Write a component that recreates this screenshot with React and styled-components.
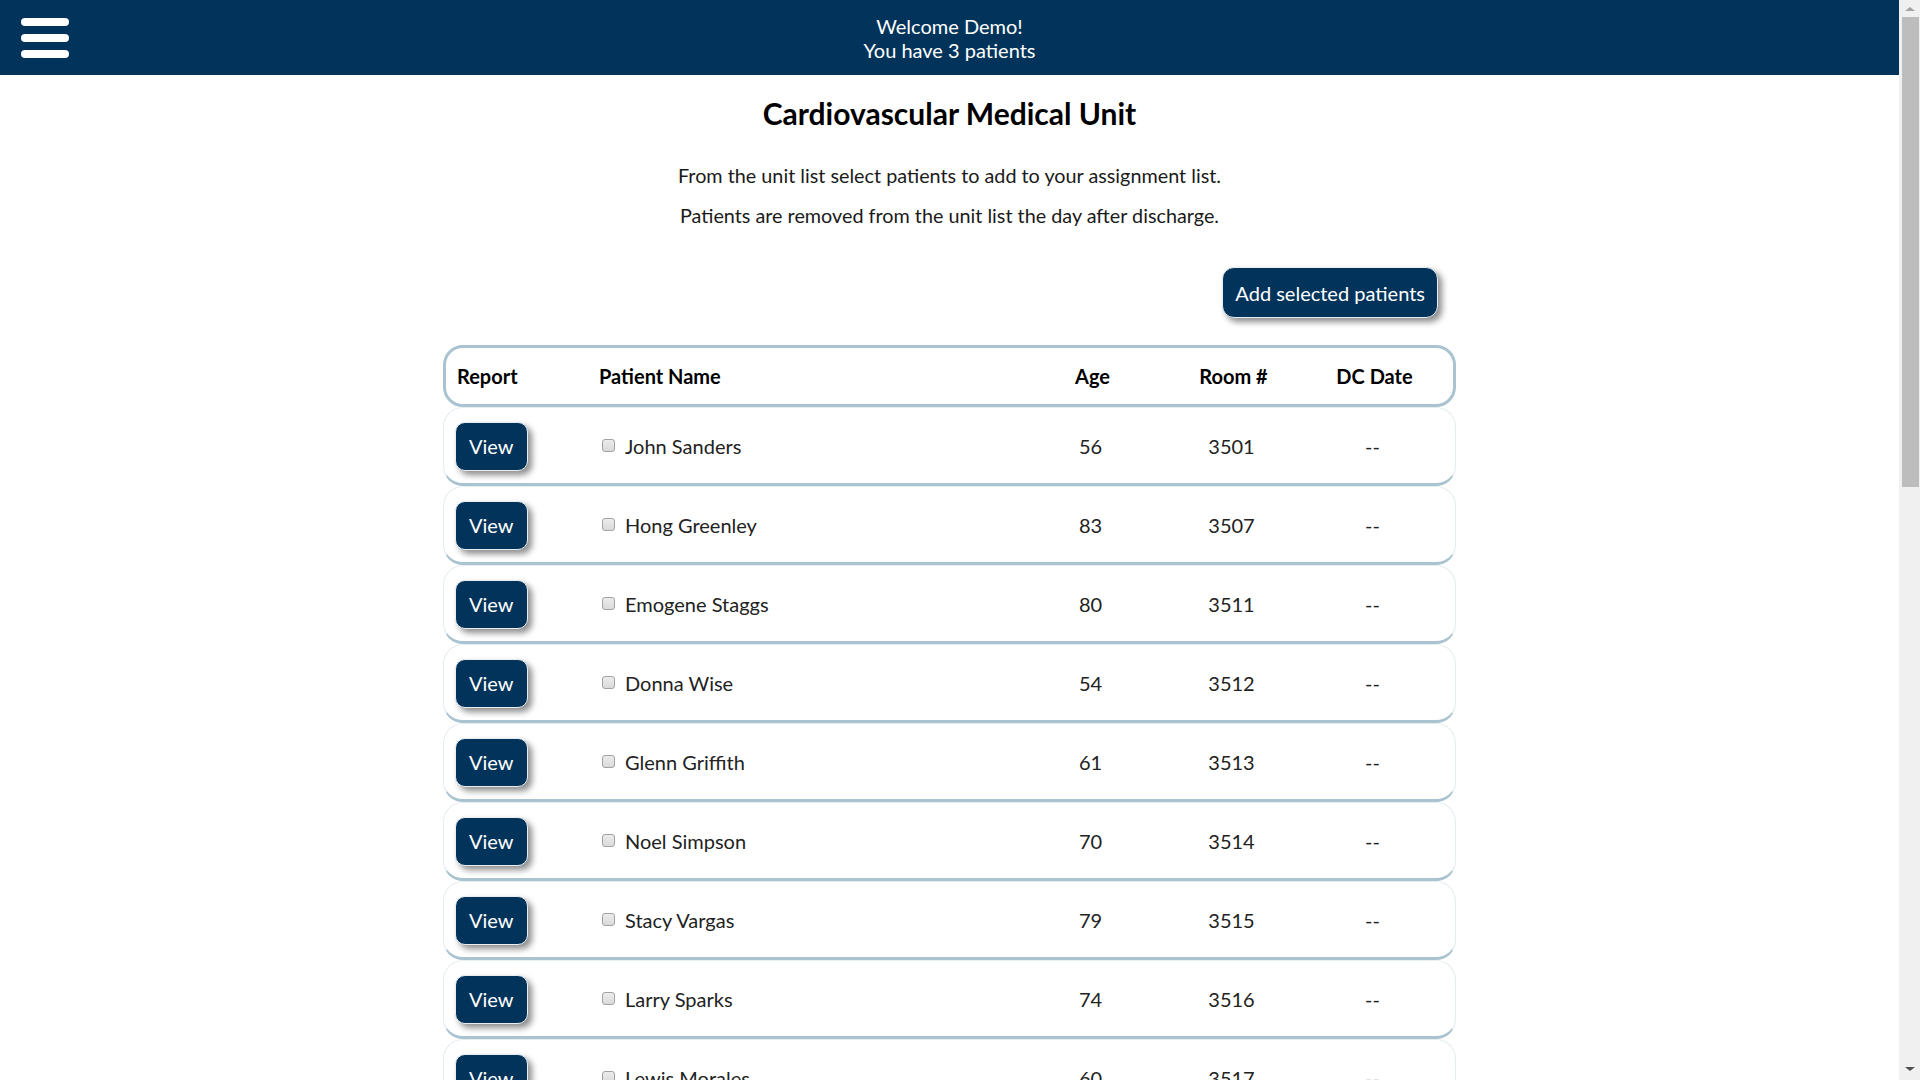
import React from "react";
import styled, { createGlobalStyle } from "styled-components";

const GlobalStyle = createGlobalStyle`
  body {
    margin: 0;
    font-family: Lato, "Open Sans", sans-serif;
    color: #111;
    background: #fff;
  }
`;

const NAVY = "#02335a";
const LINE = "#a9c3d0";

const Page = styled.div`
  padding-right: 21px;
`;

// stand-in for the browser scrollbar seen on the right of the screenshot
const ScrollTrack = styled.aside`
  position: fixed;
  top: 0;
  right: 0;
  bottom: 0;
  width: 21px;
  background: #f0f0f0;
  display: flex;
  flex-direction: column;
  align-items: center;
  padding: 3px 0;
  box-sizing: border-box;
`;

const Arrow = styled.span`
  width: 0;
  height: 0;
  border-left: 5px solid transparent;
  border-right: 5px solid transparent;
  ${(p) =>
    p.$down
      ? "border-top: 4px solid #505050; margin-top: auto; margin-bottom: 6px;"
      : "border-bottom: 4px solid #a3a3a3; margin-top: 4px;"}
`;

const Thumb = styled.span`
  width: 17px;
  height: 470px;
  margin-top: 6px;
  margin-left: 2px;
  background: #bdbdbd;
`;

const TopBar = styled.header`
  height: 75px;
  background: ${NAVY};
  display: grid;
  grid-template-columns: 1fr auto 1fr;
  align-items: center;
  color: #fff;
`;

const Burger = styled.button`
  justify-self: start;
  margin-left: 21px;
  width: 48px;
  height: 40px;
  padding: 0;
  border: none;
  background: transparent;
  display: flex;
  flex-direction: column;
  justify-content: space-between;
  cursor: pointer;

  span {
    display: block;
    height: 8px;
    border-radius: 4px;
    background: #fff;
  }
`;

const Welcome = styled.div`
  text-align: center;
  font-size: 20px;
  line-height: 24px;
`;

const Main = styled.main`
  width: 1013px;
  margin: 0 auto 8px;
`;

const Title = styled.h1`
  margin: 20px 0 0;
  text-align: center;
  font-size: 30px;
  line-height: 36px;
  font-weight: 700;
  color: #000;
`;

const Note = styled.p`
  margin: ${(p) => (p.$first ? "32px" : "16px")} 0 0;
  text-align: center;
  font-size: 19.8px;
  line-height: 24px;
  color: #1a1a1a;
`;

const Actions = styled.div`
  display: flex;
  justify-content: flex-end;
  padding: 40px 18px 0 0;
  margin-bottom: 27px;
`;

const NavyButton = styled.button`
  background: ${NAVY};
  color: #fff;
  font-family: Lato, sans-serif;
  border: 1px solid #e8eef2;
  box-shadow: 4px 4px 6px rgba(0, 0, 0, 0.45);
  cursor: pointer;
  height: ${(p) => (p.$small ? "49px" : "51px")};
  padding: 0 ${(p) => (p.$small ? "13px" : "12px")};
  border-radius: ${(p) => (p.$small ? "10px" : "12px")};
  font-size: 20px;
`;

const Row = styled.div`
  display: grid;
  grid-template-columns: 142px 423px 141px 141px 141px;
  align-items: center;
  box-sizing: border-box;
  padding: 0 11px;
  border-radius: 20px;
`;

const HeadRow = styled(Row)`
  height: 62px;
  border: 3px solid ${LINE};
  font-weight: 700;
  font-size: 20px;
  color: #000;
`;

const BodyRow = styled(Row)`
  height: 79px;
  border: 1px solid #e6edf1;
  border-bottom: 3px solid ${LINE};
  padding-left: 11px;
  padding-top: 1px;
  font-size: 20px;
  color: #222;
`;

const Cell = styled.div`
  text-align: ${(p) => (p.$center ? "center" : "left")};
`;

const NameCell = styled.label`
  display: flex;
  align-items: center;
  padding-left: 1px;
`;

const Check = styled.input.attrs({ type: "checkbox" })`
  appearance: none;
  margin: 0 10px 0 4px;
  width: 13px;
  height: 13px;
  border: 1px solid #a2a2a2;
  border-radius: 3px;
  background: linear-gradient(#ececec, #dadada);
  position: relative;
  top: -1px;
`;

const firsts = ["Maria", "James", "Linda", "Robert", "Patricia", "Michael", "Barbara", "William", "Susan", "David", "Karen", "Joseph", "Nancy", "Thomas", "Betty", "Charles"];
const lasts = ["Bennett", "Howard", "Fletcher", "Coleman", "Dawson", "Pierce", "Hayes", "Reynolds", "Porter", "Marsh", "Holland", "Warren", "Burke", "Gordon", "Ellis", "Tucker"];

const patients = [
  ["John Sanders", 56, 3501],
  ["Hong Greenley", 83, 3507],
  ["Emogene Staggs", 80, 3511],
  ["Donna Wise", 54, 3512],
  ["Glenn Griffith", 61, 3513],
  ["Noel Simpson", 70, 3514],
  ["Stacy Vargas", 79, 3515],
  ["Larry Sparks", 74, 3516],
  ["Lewis Morales", 60, 3517],
];
for (let i = 0; patients.length < 25; i++) {
  patients.push([
    `${firsts[i % firsts.length]} ${lasts[(i * 7) % lasts.length]}`,
    48 + ((i * 13) % 41),
    3518 + i,
  ]);
}

export default function App() {
  return (
    <Page>
      <GlobalStyle />
      <TopBar>
        <Burger aria-label="Menu">
          <span />
          <span />
          <span />
        </Burger>
        <Welcome>
          Welcome Demo!
          <br />
          You have 3 patients
        </Welcome>
        <div />
      </TopBar>
      <Main>
        <Title>Cardiovascular Medical Unit</Title>
        <Note $first>From the unit list select patients to add to your assignment list.</Note>
        <Note>Patients are removed from the unit list the day after discharge.</Note>
        <Actions>
          <NavyButton>Add selected patients</NavyButton>
        </Actions>
        <HeadRow>
          <Cell>Report</Cell>
          <Cell>Patient Name</Cell>
          <Cell $center>Age</Cell>
          <Cell $center>Room #</Cell>
          <Cell $center>DC Date</Cell>
        </HeadRow>
        {patients.map(([name, age, room]) => (
          <BodyRow key={room}>
            <Cell>
              <NavyButton $small>View</NavyButton>
            </Cell>
            <NameCell>
              <Check />
              {name}
            </NameCell>
            <Cell $center>{age}</Cell>
            <Cell $center>{room}</Cell>
            <Cell $center>--</Cell>
          </BodyRow>
        ))}
      </Main>
      <ScrollTrack aria-hidden="true">
        <Arrow />
        <Thumb />
        <Arrow $down />
      </ScrollTrack>
    </Page>
  );
}
